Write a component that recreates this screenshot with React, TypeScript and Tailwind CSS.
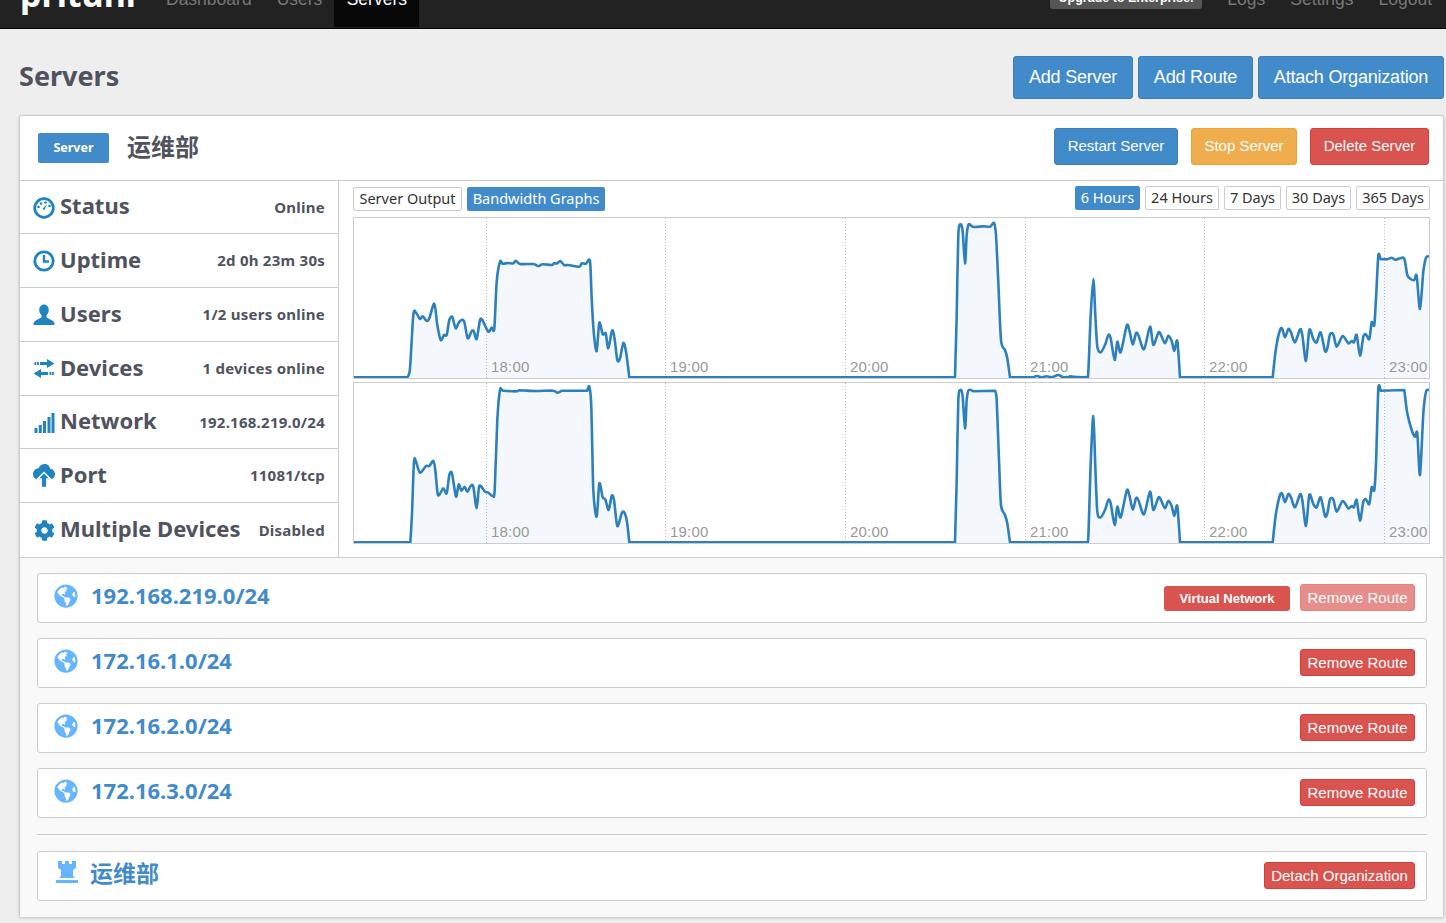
import React from 'react';
import { FaCog, FaGlobeAmericas } from 'react-icons/fa';

type Pt = [number, number];

// points were read off the picture at 3x, so scale them back to page coords
const seg = (ox: number, oy: number, pts: Pt[]): Pt[] =>
  pts.map(([x, y]) => [ox + x / 3, oy + y / 3] as Pt);

const smooth = (pts: Pt[]) => {
  // long flat stretches stay straight, only the wiggly bits get a curve
  const isLong = (a: Pt, b: Pt) => Math.abs(a[0] - b[0]) > 20;
  const handle = (i: number): Pt => {
    const prev = i > 0 && !isLong(pts[i - 1], pts[i]) ? pts[i - 1] : pts[i];
    const next = i < pts.length - 1 && !isLong(pts[i + 1], pts[i]) ? pts[i + 1] : pts[i];
    return [(next[0] - prev[0]) * 0.14, (next[1] - prev[1]) * 0.14];
  };
  let d = `M${pts[0][0].toFixed(1)} ${pts[0][1].toFixed(1)}`;
  for (let i = 0; i < pts.length - 1; i++) {
    const p1 = pts[i];
    const p2 = pts[i + 1];
    if (isLong(p1, p2)) {
      d += `L${p2[0].toFixed(1)} ${p2[1].toFixed(1)}`;
      continue;
    }
    const h1 = handle(i);
    const h2 = handle(i + 1);
    d += `C${(p1[0] + h1[0]).toFixed(1)} ${(p1[1] + h1[1]).toFixed(1)} ${(p2[0] - h2[0]).toFixed(1)} ${(p2[1] - h2[1]).toFixed(1)} ${p2[0].toFixed(1)} ${p2[1].toFixed(1)}`;
  }
  return d;
};

const rightMiddle: Pt[] = [[92,412],[105,390],[115,360],[122,370],[134,435],[142,380],[152,412],[170,332],[178,345],[188,388],[198,355],[205,360],[222,403],[240,335],[250,390],[265,353],[272,358],[285,385],[295,362],[305,378],[313,408],[322,378],[330,487],[608,487],[618,400],[630,345],[637,342],[645,367],[655,342],[663,352],[675,382],[690,343],[697,360],[708,438],[718,345],[730,372],[740,382],[752,352],[765,408],[772,400],[780,358],[790,358],[800,395],[818,363],[835,385],[845,378],[852,382],[860,360],[870,422],[880,365],[888,358],[898,372],[905,322],[913,330],[918,250]];

const topLine: Pt[] = [
  ...seg(350, 215, [[10,487],[172,487],[180,460],[190,300],[198,293],[210,312],[218,304],[230,318],[238,310],[253,266],[262,330],[272,375],[282,360],[290,360],[298,315],[307,306],[317,340],[328,320],[342,318],[353,370],[365,348],[372,350],[380,372],[390,315],[398,317],[415,350],[425,338],[433,340],[440,200],[450,140],[458,146],[475,144],[490,145],[497,137],[510,147],[550,147],[565,153],[578,148],[605,150],[612,145],[622,145],[631,138],[642,150],[655,150],[688,155],[695,145],[708,146],[720,139],[725,250],[732,360],[740,408],[748,323],[758,358],[767,355],[775,400],[786,347],[793,365],[802,435],[810,430],[820,384],[828,410],[838,487]]),
  ...seg(700, 215, [[0,487],[765,487],[770,300],[775,60],[782,28],[788,50],[795,145],[800,60],[806,28],[820,36],[850,34],[870,35],[882,24],[888,60],[895,200],[903,375],[915,405],[922,430],[930,487],[1000,487],[1010,483],[1025,487],[1040,484],[1055,487],[1075,480],[1090,487],[1110,485],[1130,487]]),
  ...seg(1070, 215, [[0,484],[20,486],[50,486],[55,470],[62,300],[70,192],[76,300],[82,395], ...rightMiddle,[925,122],[932,132],[945,132],[952,133],[965,128],[975,134],[990,130],[1003,131],[1012,180],[1022,192],[1033,195],[1040,183],[1050,282],[1060,170],[1068,128],[1078,124]]),
];

const bottomLine: Pt[] = [
  ...seg(350, 380, [[10,487],[181,487],[186,400],[192,245],[198,245],[210,278],[228,258],[238,258],[250,243],[256,270],[264,345],[280,325],[290,340],[298,285],[306,280],[318,350],[326,313],[334,332],[344,320],[352,335],[362,318],[370,320],[380,385],[388,318],[405,335],[415,338],[428,348],[434,330],[442,120],[450,30],[460,32],[500,34],[510,31],[560,33],[610,32],[622,38],[635,32],[712,32],[718,20],[724,80],[730,330],[740,410],[748,310],[758,352],[766,358],[776,390],[785,347],[792,360],[802,438],[815,400],[822,396],[830,420],[838,487]]),
  ...seg(700, 380, [[0,487],[765,487],[770,300],[775,60],[782,30],[788,50],[795,145],[800,60],[806,30],[820,34],[885,32],[890,60],[897,240],[903,375],[915,405],[922,430],[930,487]]),
  ...seg(1070, 380, [[50,487],[55,470],[62,250],[70,108],[76,260],[82,395], ...rightMiddle,[925,28],[932,32],[1003,30],[1012,100],[1025,150],[1035,170],[1042,160],[1050,285],[1060,100],[1068,35],[1078,30]]),
];

const gridLines = [
  { x: 486.5, label: '18:00' },
  { x: 665.5, label: '19:00' },
  { x: 845.5, label: '20:00' },
  { x: 1025.5, label: '21:00' },
  { x: 1204.5, label: '22:00' },
  { x: 1384.5, label: '23:00' },
];

const Chart = ({ line, top, base }: { line: Pt[]; top: number; base: number }) => {
  const d = smooth(line);
  const last = line[line.length - 1];
  return (
    <div className="h-[162px] border border-[#ccc] bg-white">
      <svg width="1075" height="160" viewBox={`354 ${top} 1075 160`} className="block">
        <path d={`${d}L${last[0]} ${base}L354 ${base}Z`} fill="#f4f7fb" />
        {gridLines.map((g) => (
          <g key={g.x}>
            <line x1={g.x} x2={g.x} y1={top} y2={top + 160} stroke="#bbb" strokeDasharray="1 2" />
            <text x={g.x + 4.5} y={top + 154} fontSize="15" letterSpacing="0.2" fill="#999" fontFamily="'Liberation Sans', sans-serif">
              {g.label}
            </text>
          </g>
        ))}
        <path d={d} fill="none" stroke="#2e80ba" strokeWidth="2.6" strokeLinejoin="round" />
      </svg>
    </div>
  );
};

const StatusIcon = () => (
  <svg viewBox="0 0 22 22" className="h-[22px] w-[22px]" fill="#1f84bf">
    <circle cx="11" cy="11" r="9.3" fill="none" stroke="#1f84bf" strokeWidth="2.8" />
    <circle cx="5.5" cy="10" r="1.3" />
    <circle cx="8" cy="6.5" r="1.3" />
    <circle cx="12.500" cy="5.500" r="1.3" />
    <circle cx="16.500" cy="9" r="1.3" />
    <path d="M9.800 11.500 14 7l-2.300 5.500a1.100 1.100 0 0 1-1.900-1z" />
  </svg>
);

const ClockIcon = () => (
  <svg viewBox="0 0 22 22" className="h-[22px] w-[22px]" fill="none" stroke="#1f84bf">
    <circle cx="11" cy="11" r="9.200" strokeWidth="2.800" />
    <path d="M11 5v6.500h5" strokeWidth="2.400" />
  </svg>
);

const UserIcon = () => (
  <svg viewBox="0 0 22 22" className="h-[22px] w-[22px]" fill="#1f84bf">
    <path d="M11 .500C8 .500 6.200 3 6.200 6c0 2.200 1 4.200 2.300 5.300v2.300C6 15.200 1.500 16 .500 19.500V21h21v-1.500c-1-3.500-5.500-4.300-8-5.900v-2.300C14.800 10.200 15.800 8.200 15.800 6 15.800 3 14 .500 11 .500z" />
  </svg>
);

const DevicesIcon = () => (
  <svg viewBox="0 0 22 22" className="h-[22px] w-[22px]" fill="#1f84bf">
    <path d="M14 1l7.500 4.500L14 10V7H7V4h7zM8 11v3h7v3H8v3L.5 15.500z" />
    <rect x="1.500" y="4" width="1.800" height="3" />
    <rect x="4" y="4" width="1.800" height="3" />
    <rect x="16.500" y="14" width="1.800" height="3" />
    <rect x="19" y="14" width="1.800" height="3" />
  </svg>
);

const SignalIcon = () => (
  <svg viewBox="0 0 22 22" className="h-[22px] w-[22px]" fill="#1f84bf">
    <rect x="1.500" y="16" width="3" height="5" />
    <rect x="5.800" y="13" width="3" height="8" />
    <rect x="10" y="9" width="3" height="12" />
    <rect x="14.500" y="5" width="3" height="16" />
    <rect x="18.500" y="1" width="3" height="20" />
  </svg>
);

const CloudIcon = () => (
  <svg viewBox="0 0 22 24" className="h-[24px] w-[22px]" fill="#1f84bf">
    <path d="M12 0C8.800 0 6.500 1.800 5.600 4.300 2.500 4.500 0 7 0 10c0 2 1 3.800 2.600 4.800L7 16h8l4.500-1.200C21 13.800 22 12 22 10c0-2.800-2.200-5-4.800-5.200C16.500 2 14.500 0 12 0z" />
    <path d="M11 8.500l6.500 6.500h-3.700v8.500H8.200V15H4.500z" stroke="#fff" strokeWidth="1.400" />
  </svg>
);

const TowerIcon = () => (
  <svg viewBox="0 0 22 22" className="h-[22px] w-[22px]" fill="#66b5ff">
    <path d="M2 0h4v3h3V0h4v3h3V0h4v7l-3 2v6l2 2H3l2-2V9L2 7z" />
    <rect x="0" y="19" width="22" height="3" />
  </svg>
);

const stats = [
  { name: 'Status', value: 'Online', icon: <StatusIcon />, height: 'h-[53px]' },
  { name: 'Uptime', value: '2d 0h 23m 30s', icon: <ClockIcon />, height: 'h-[54px]' },
  { name: 'Users', value: '1/2 users online', icon: <UserIcon />, height: 'h-[54px]' },
  { name: 'Devices', value: '1 devices online', icon: <DevicesIcon />, height: 'h-[54px]' },
  { name: 'Network', value: '192.168.219.0/24', icon: <SignalIcon />, height: 'h-[53px]' },
  { name: 'Port', value: '11081/tcp', icon: <CloudIcon />, height: 'h-[54px]' },
  { name: 'Multiple Devices', value: 'Disabled', icon: <FaCog className="h-[21px] w-[21px] text-[#1f84bf]" />, height: 'h-[54px]' },
];

const routes = ['192.168.219.0/24', '172.16.1.0/24', '172.16.2.0/24', '172.16.3.0/24'];

const ranges = [
  { label: '6 Hours', width: 'w-[65px]' },
  { label: '24 Hours', width: 'w-[74px]' },
  { label: '7 Days', width: 'w-[57px]' },
  { label: '30 Days', width: 'w-[65px]' },
  { label: '365 Days', width: 'w-[74px]' },
];

const ubuntu = "font-['Noto_Sans','Noto_Sans_CJK_SC',sans-serif]";
const arial = "font-['Liberation_Sans',Arial,sans-serif]";

const App: React.FC = () => {
  return (
    <div className={`h-[923px] overflow-hidden bg-[#eee] ${arial}`}>
      {/* Navbar, page is scrolled a bit so only the lower part shows */}
      <nav className="-mt-[22px] flex h-[51px] items-start border-b border-black bg-[#222] pl-5 pr-[14px] text-[17.5px] text-[#777]">
        <div className={`mt-[-9px] w-[146px] text-[34px] font-bold leading-[50px] text-white ${ubuntu}`}>pritunl</div>
        <div className="pt-[8px]">Dashboard</div>
        <div className="ml-[25px] pt-[8px]">Users</div>
        <div className="ml-[12px] h-[49px] w-[85px] bg-[#080808] pt-[8px] text-center text-white">Servers</div>
        <div className="ml-auto mr-[25px] h-[31px] w-[152px] rounded-[3px] bg-[#555] pt-[11px] text-center text-[12.5px] font-bold text-white">Upgrade to Enterprise!</div>
        <div className="pt-[8px]">Logs</div>
        <div className="ml-[25px] pt-[8px]">Settings</div>
        <div className="ml-[25px] pt-[8px]">Logout</div>
      </nav>

      <div className="pl-[19px] pr-[2px]">
        {/* Page Header */}
        <div className="mt-[27px] flex h-[43px] items-center justify-between">
          <h1 className={`mb-[2px] text-[27px] font-bold text-[#50535e] ${ubuntu}`}>Servers</h1>
          <div className="flex gap-[5px] text-[18px] tracking-[-0.2px] text-white">
            <button className="h-[43px] w-[120px] rounded-[3px] border border-[#3b7eb8] bg-[#428bca]">Add Server</button>
            <button className="h-[43px] w-[115px] rounded-[3px] border border-[#3b7eb8] bg-[#428bca]">Add Route</button>
            <button className="h-[43px] w-[186px] rounded-[3px] border border-[#3b7eb8] bg-[#428bca]">Attach Organization</button>
          </div>
        </div>

        {/* Server Card */}
        <div className="mt-4 h-[802px] rounded-[3px] border border-[#ccc] bg-white shadow-[0_1px_3px_rgba(0,0,0,0.2)]">
          <div className="flex h-[65px] items-center border-b border-[#ccc] pl-[18px] pr-[14px]">
            <span className={`flex h-[30px] w-[71px] items-center justify-center rounded-[2px] bg-[#428bca] text-[12.5px] font-bold text-white ${ubuntu}`}>Server</span>
            <span className={`mb-[2px] ml-[18px] text-[24px] font-bold text-[#50535e] ${ubuntu}`}>运维部</span>
            <div className="mb-[3px] ml-auto flex gap-[13px] text-[15px] text-white">
              <button className="h-[37px] w-[124px] rounded-[3px] border border-[#3b7eb8] bg-[#428bca]">Restart Server</button>
              <button className="h-[37px] w-[106px] rounded-[3px] border border-[#eea236] bg-[#f0ad4e]">Stop Server</button>
              <button className="h-[37px] w-[119px] rounded-[3px] border border-[#d43f3a] bg-[#d9534f]">Delete Server</button>
            </div>
          </div>

          <div className="flex h-[377px] border-b border-[#ccc]">
            {/* Stats */}
            <div className={`flex w-[319px] shrink-0 flex-col border-r border-[#ccc] text-[#50535e] ${ubuntu}`}>
              {stats.map((s, i) => (
                <div key={s.name} className={`flex items-center px-[13px] ${s.height} ${i < stats.length - 1 ? 'border-b border-[#ccc]' : ''}`}>
                  <span className="mt-[1px] flex w-[22px] justify-center">{s.icon}</span>
                  <span className="mb-[3px] ml-[5px] text-[22px] font-bold">{s.name}</span>
                  <span className="ml-auto text-[15px] font-bold tracking-[0.25px]">{s.value}</span>
                </div>
              ))}
            </div>

            {/* Graphs */}
            <div className="min-w-0 flex-1 pl-[14px]">
              <div className={`flex h-[36px] items-start pr-[13px] text-[14.5px] ${ubuntu}`}>
                <span className="mt-[6px] flex h-6 w-[109px] items-center justify-center rounded-[2px] border border-[#ccc] text-[#333]">Server Output</span>
                <span className="ml-[5px] mt-[6px] flex h-6 w-[138px] items-center justify-center rounded-[2px] bg-[#428bca] text-white">Bandwidth Graphs</span>
                <div className="ml-auto mt-[5px] flex gap-[5px]">
                  {ranges.map((r, i) => (
                    <span
                      key={r.label}
                      className={`flex h-6 items-center justify-center rounded-[2px] border ${r.width} ${i === 0 ? 'border-[#428bca] bg-[#428bca] text-white' : 'border-[#ccc] text-[#333]'}`}
                    >
                      {r.label}
                    </span>
                  ))}
                </div>
              </div>
              <div className="flex w-[1077px] flex-col gap-[3px]">
                <Chart line={topLine} top={218} base={378} />
                <Chart line={bottomLine} top={383} base={543} />
              </div>
            </div>
          </div>

          {/* Routes */}
          <div className="flex h-[359px] flex-col bg-[#f9f9f9] pl-[17px] pr-[16px] pt-[15px]">
            <div className="flex flex-col gap-[15px]">
              {routes.map((r, i) => (
                <div key={r} className="flex h-[50px] items-center rounded-[3px] border border-[#ccc] bg-white pl-4 pr-[11px]">
                  <FaGlobeAmericas className="mt-[-4px] h-6 w-6 text-[#66b5ff]" />
                  <span className={`mb-[5px] ml-[13px] text-[22px] font-bold text-[#428bca] ${ubuntu}`}>{r}</span>
                  {i === 0 && (
                    <span className="ml-auto mt-[1px] flex h-[25px] w-[126px] items-center justify-center rounded-[3px] bg-[#d9534f] text-[13px] font-bold text-white">Virtual Network</span>
                  )}
                  <button
                    className={`mb-[1px] h-[27px] w-[115px] rounded-[3px] border border-[#d43f3a] bg-[#d9534f] text-[15px] leading-none text-white ${i === 0 ? 'ml-[10px] opacity-65' : 'ml-auto'}`}
                  >
                    Remove Route
                  </button>
                </div>
              ))}
            </div>
            <div className="mt-4 border-t border-[#ccc]" />
            <div className="mt-4 flex h-[50px] items-center rounded-[3px] border border-[#ccc] bg-white pl-[18px] pr-[11px]">
              <span className="mb-[8px]"><TowerIcon /></span>
              <span className={`mb-[6px] ml-[12px] text-[23px] font-bold text-[#428bca] ${ubuntu}`}>运维部</span>
              <button className="mb-[1px] ml-auto h-[27px] w-[151px] rounded-[3px] border border-[#d43f3a] bg-[#d9534f] text-[15px] leading-none text-white">
                Detach Organization
              </button>
            </div>
          </div>
        </div>
      </div>
    </div>
  );
};

export default App;
